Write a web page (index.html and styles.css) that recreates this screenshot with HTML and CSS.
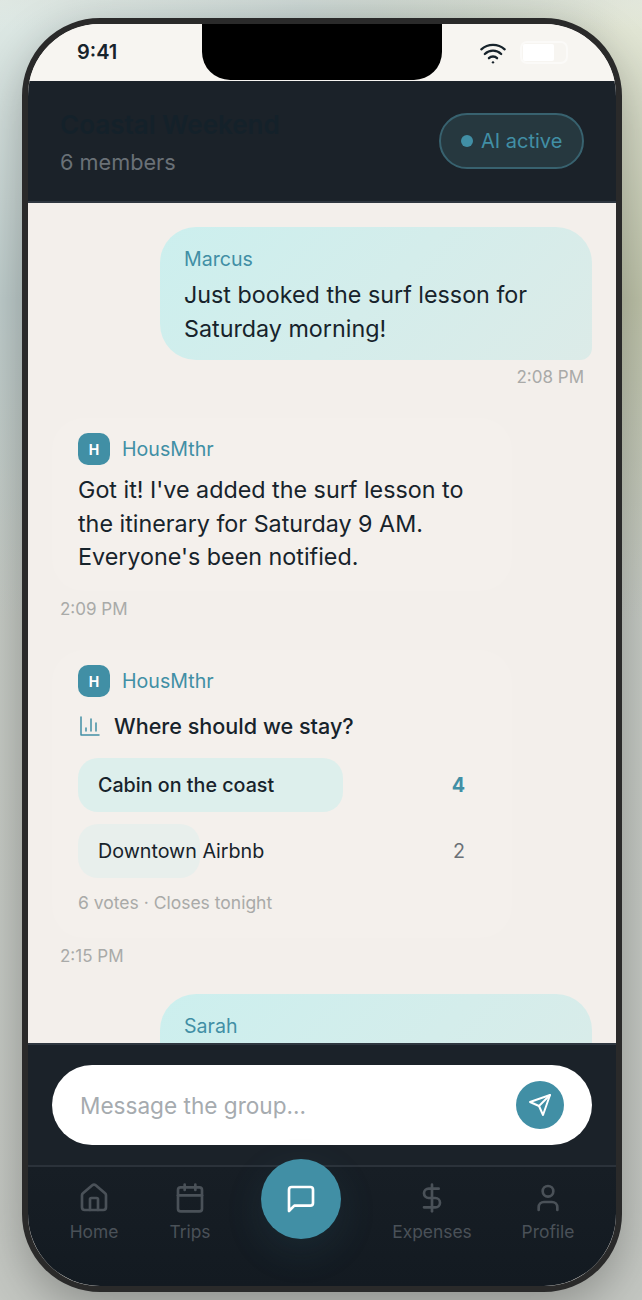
FILE: index.html
```html
<!DOCTYPE html>
<html>
<head>
  <meta charset="UTF-8">
  <title>Coastal Weekend</title>
  <link rel="stylesheet" href="styles.css">
</head>
<body>
  <div class="phone">
    <div class="status">
      <span class="clock">9:41</span>
      <div class="notch"></div>
      <div class="status-right">
        <svg class="wifi" viewBox="0 0 24 24"><path d="M12 20h.01"/><path d="M2 8.82a15 15 0 0 1 20 0"/><path d="M5 12.859a10 10 0 0 1 14 0"/><path d="M8.5 16.429a5 5 0 0 1 7 0"/></svg>
        <div class="battery"><div class="battery-fill"></div></div>
      </div>
    </div>

    <div class="header">
      <div class="header-text">
        <div class="title">Coastal Weekend</div>
        <div class="members">6 members</div>
      </div>
      <div class="ai-pill"><span class="dot"></span>AI active</div>
    </div>

    <div class="messages">
      <div class="bubble">
        <div class="sender">Marcus</div>
        <div class="text">Just booked the surf lesson for Saturday morning!</div>
      </div>
      <div class="time time-right">2:08 PM</div>

      <div class="card card-msg">
        <div class="bot-row"><span class="avatar">H</span><span class="sender">HousMthr</span></div>
        <div class="text">Got it! I've added the surf lesson to the itinerary for Saturday 9 AM. Everyone's been notified.</div>
      </div>
      <div class="time time-left">2:09 PM</div>

      <div class="card card-poll">
        <div class="bot-row"><span class="avatar">H</span><span class="sender">HousMthr</span></div>
        <div class="poll-title">
          <svg class="chart" viewBox="0 0 24 24"><path d="M3 3v18h18"/><path d="M8 17v-3"/><path d="M13 17V5"/><path d="M18 17V9"/></svg>
          Where should we stay?
        </div>
        <div class="option option-win">
          <div class="option-bar" style="width: 265px"></div>
          <span class="option-name">Cabin on the coast</span>
          <span class="option-count">4</span>
        </div>
        <div class="option">
          <div class="option-bar" style="width: 122px"></div>
          <span class="option-name">Downtown Airbnb</span>
          <span class="option-count">2</span>
        </div>
        <div class="votes">6 votes · Closes tonight</div>
      </div>
      <div class="time time-left">2:15 PM</div>

      <div class="bubble bubble-last">
        <div class="sender">Sarah</div>
      </div>
    </div>

    <div class="composer">
      <div class="input">
        <span class="placeholder">Message the group...</span>
        <div class="send">
          <svg viewBox="0 0 24 24"><path d="m22 2-7 20-4-9-9-4Z"/><path d="M22 2 11 13"/></svg>
        </div>
      </div>
    </div>

    <div class="nav">
      <div class="nav-item">
        <svg viewBox="0 0 24 24"><path d="M15 21v-8a1 1 0 0 0-1-1h-4a1 1 0 0 0-1 1v8"/><path d="M3 10a2 2 0 0 1 .709-1.528l7-5.999a2 2 0 0 1 2.582 0l7 5.999A2 2 0 0 1 21 10v9a2 2 0 0 1-2 2H5a2 2 0 0 1-2-2z"/></svg>
        Home
      </div>
      <div class="nav-item">
        <svg viewBox="0 0 24 24"><path d="M8 2v4"/><path d="M16 2v4"/><rect x="3" y="4" width="18" height="18" rx="2"/><path d="M3 10h18"/></svg>
        Trips
      </div>
      <div class="fab">
        <svg viewBox="0 0 24 24"><path d="M21 15a2 2 0 0 1-2 2H7l-4 4V5a2 2 0 0 1 2-2h14a2 2 0 0 1 2 2z"/></svg>
      </div>
      <div class="nav-item nav-expenses">
        <svg viewBox="0 0 24 24"><path d="M12 2v20"/><path d="M17 5H9.5a3.5 3.5 0 0 0 0 7h5a3.5 3.5 0 0 1 0 7H6"/></svg>
        Expenses
      </div>
      <div class="nav-item">
        <svg viewBox="0 0 24 24"><path d="M19 21v-2a4 4 0 0 0-4-4H9a4 4 0 0 0-4 4v2"/><circle cx="12" cy="7" r="4"/></svg>
        Profile
      </div>
    </div>
  </div>
</body>
</html>
```

FILE: styles.css
```css
* {
  box-sizing: border-box;
}
html, body {
  margin: 0;
  height: 1300px;
  overflow: hidden;
}
body {
  font-family: "Inter", sans-serif;
  color: #17232b;
  padding: 18px 20px 8px 22px;
  background:
    linear-gradient(rgba(222, 228, 222, 0.45), rgba(222, 228, 222, 0) 30px),
    radial-gradient(circle at 0 0, #dfeae6 0, #bfcdcc 300px, rgba(191, 205, 204, 0) 620px),
    radial-gradient(circle at 100% 0, #e5e9d9 0, #bfc4aa 300px, rgba(191, 196, 170, 0) 620px),
    linear-gradient(#c8cec7, #c4c7c2);
}
svg {
  fill: none;
  stroke: currentColor;
  stroke-width: 2;
  stroke-linecap: round;
  stroke-linejoin: round;
}

.phone {
  width: 600px;
  height: 1274px;
  border: 6px solid #2a2a2a;
  border-radius: 78px;
  background: #f7f5f1;
  overflow: hidden;
  display: flex;
  flex-direction: column;
  box-shadow: 0 16px 48px rgba(0, 0, 0, 0.28);
}

/* status bar */
.status {
  height: 57px;
  flex: none;
  background: #f7f5f1;
  display: flex;
  justify-content: space-between;
  padding: 0 48px 0 49px;
  align-items: center;
  position: relative;
}
.clock {
  font-size: 20px;
  font-weight: 600;
  margin-top: -1px;
}
.notch {
  position: absolute;
  left: 174px;
  top: 0;
  width: 240px;
  height: 56px;
  background: #000;
  border-radius: 0 0 28px 28px;
}
.status-right {
  display: flex;
  align-items: center;
  gap: 13px;
}
.wifi {
  width: 28px;
  height: 28px;
}
.battery {
  width: 48px;
  height: 23px;
  border: 2px solid #fbfaf8;
  border-radius: 7px;
  padding: 1px;
}
.battery-fill {
  width: 31px;
  height: 17px;
  background: #fff;
  border-radius: 2px;
}

/* header */
.header {
  height: 122px;
  flex: none;
  background: #1b2229;
  border-bottom: 2px solid #2f3740;
  display: flex;
  justify-content: space-between;
  align-items: center;
  padding: 0 32px;
}
.header-text {
  padding-top: 3px;
}
.title {
  font-size: 26px;
  font-weight: 600;
  color: #14212a;
  line-height: 34px;
}
.members {
  font-size: 21.7px;
  color: #6a7177;
  line-height: 32px;
  margin-top: 4px;
}
.ai-pill {
  width: 145px;
  height: 56px;
  border: 2px solid #38626f;
  border-radius: 28px;
  background: #26383f;
  color: #418fa5;
  font-size: 20px;
  display: flex;
  align-items: center;
  padding-left: 20px;
}
.dot {
  width: 12px;
  height: 12px;
  border-radius: 50%;
  background: #418fa5;
  margin-right: 8px;
}

/* messages */
.messages {
  flex: 1;
  min-height: 0;
  overflow: hidden;
  background: #f3efeb;
  padding: 24px 24px 0;
}
.bubble {
  margin-left: 108px;
  width: 432px;
  background: linear-gradient(135deg, #ccefee, #dcebe8);
  border-radius: 36px 36px 12px 36px;
  padding: 19px 24px 15px;
}
.bubble-last {
  height: 200px;
  margin-top: 26px;
}
.sender {
  font-size: 19.6px;
  line-height: 26px;
  color: #418fa5;
}
.text {
  font-size: 23.3px;
  line-height: 33.5px;
  margin-top: 6px;
}
.time {
  font-size: 17px;
  line-height: 24px;
  color: #a9aaa8;
}
.time-right {
  text-align: right;
  padding-right: 8px;
  margin-top: 5px;
}
.time-left {
  margin-left: 8px;
  margin-top: 6px;
}
.card {
  width: 460px;
  background: #f4f0ec;
  border-radius: 32px;
  padding: 15px 26px;
}
.card-msg {
  margin-top: 29px;
  height: 173px;
}
.card-msg .text {
  margin-top: 8px;
}
.card-poll {
  margin-top: 29px;
  height: 288px;
}
.bot-row {
  display: flex;
  align-items: center;
  gap: 12px;
}
.avatar {
  width: 32px;
  height: 32px;
  border-radius: 10px;
  background: #418fa5;
  color: #fff;
  font-size: 14px;
  font-weight: 700;
  display: flex;
  align-items: center;
  justify-content: center;
}
.poll-title {
  display: flex;
  align-items: center;
  gap: 12px;
  font-size: 21.6px;
  font-weight: 500;
  margin-top: 15px;
  height: 28px;
}
.chart {
  width: 24px;
  height: 24px;
  color: #418fa5;
  stroke-width: 1.5;
}
.option {
  position: relative;
  height: 54px;
  display: flex;
  justify-content: space-between;
  align-items: center;
  padding: 0 20px;
  width: 407px;
  font-size: 19.7px;
  margin-top: 12px;
}
.option-win {
  margin-top: 18px;
}
.option-bar {
  position: absolute;
  left: 0;
  top: 0;
  bottom: 0;
  background: #e8efec;
  border-radius: 20px;
}
.option-win .option-bar {
  background: #ddefec;
}
.option-name, .option-count {
  position: relative;
}
.option-count {
  color: #6a7177;
}
.option-win .option-name {
  font-weight: 500;
}
.option-win .option-count {
  color: #418fa5;
  font-weight: 700;
}
.votes {
  font-size: 17.5px;
  line-height: 24px;
  color: #a9aaa8;
  margin-top: 13px;
}

/* composer */
.composer {
  height: 122px;
  flex: none;
  background: #1b2229;
  border-top: 2px solid #2f3740;
  padding: 20px 24px;
}
.input {
  height: 80px;
  background: #fff;
  border-radius: 40px;
  display: flex;
  align-items: center;
  justify-content: space-between;
  padding: 0 28px;
}
.placeholder {
  font-size: 22.6px;
  color: #a6abaf;
}
.send {
  width: 48px;
  height: 48px;
  border-radius: 50%;
  background: #418fa5;
  color: #fff;
  display: flex;
  align-items: center;
  justify-content: center;
}
.send svg {
  width: 24px;
  height: 24px;
}

/* nav */
.nav {
  height: 121px;
  flex: none;
  position: relative;
  background: linear-gradient(#171e25, #131a21);
  border-top: 2px solid #2b323a;
  display: grid;
  grid-template-columns: 116px 76px 146px 116px 116px;
  padding: 0 8px;
}
.nav-item {
  display: flex;
  flex-direction: column;
  align-items: center;
  font-size: 17.4px;
  line-height: 24px;
  color: #4a5158;
  padding-top: 15px;
}
.nav-item svg {
  width: 32px;
  height: 32px;
  margin-bottom: 6px;
}
.nav-expenses {
  grid-column: 4;
}
.fab {
  width: 80px;
  height: 80px;
  border-radius: 50%;
  background: #418fa5;
  color: #fff;
  position: absolute;
  left: 233px;
  top: -8px;
  display: flex;
  align-items: center;
  justify-content: center;
  box-shadow: 0 12px 40px rgba(65, 143, 165, 0.12);
}
.fab svg {
  width: 32px;
  height: 32px;
}
```
